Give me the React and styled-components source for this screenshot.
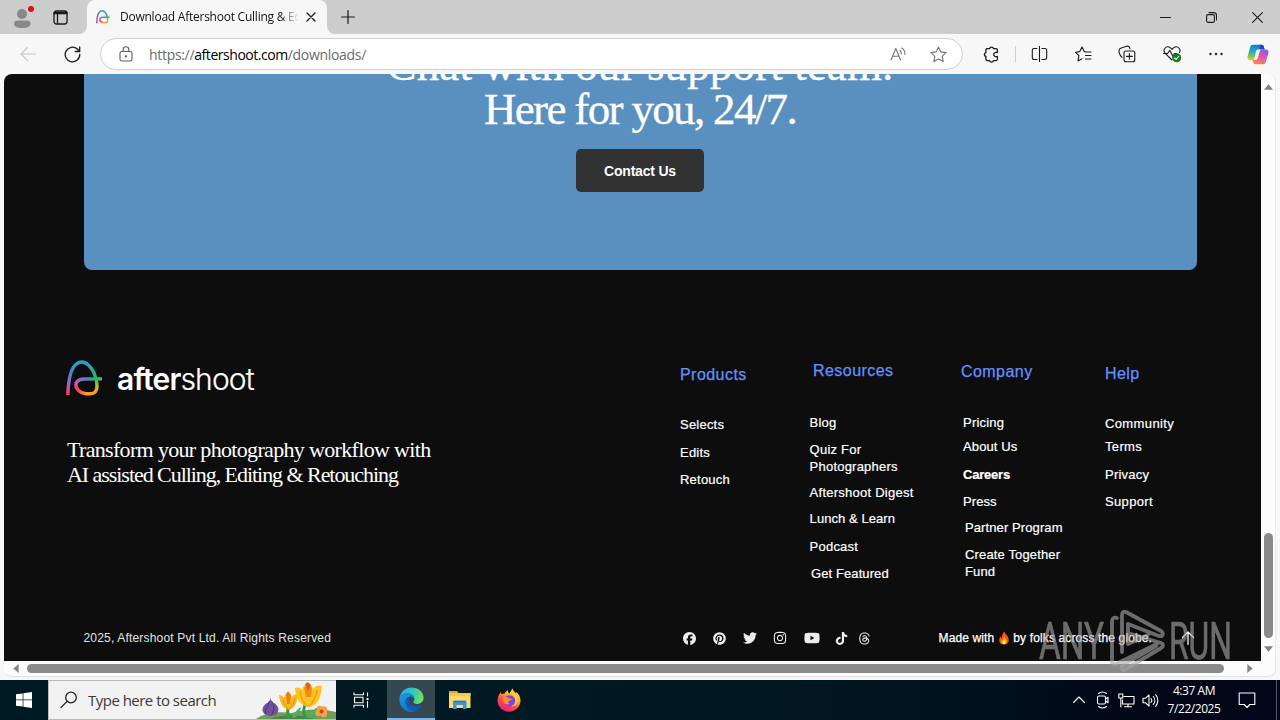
import styled, { createGlobalStyle } from "styled-components";
import {
  FaFacebook,
  FaPinterest,
  FaTwitter,
  FaYoutube,
  FaTiktok,
  FaThreads,
  FaInstagram,
} from "react-icons/fa6";

const GlobalStyle = createGlobalStyle`
  * {
    box-sizing: border-box;
  }
  body {
    margin: 0;
    overflow: hidden;
    font-family: "Open Sans", sans-serif;
  }
  svg {
    display: block;
    flex: none;
  }
`;

const Screen = styled.div`
  position: relative;
  display: flex;
  flex-direction: column;
  width: 1280px;
  height: 720px;
  background: #f7f7f7;
  overflow: hidden;
`;

/* ---------- browser chrome ---------- */

const TabStrip = styled.div`
  display: flex;
  align-items: center;
  height: 34px;
  background: #f7f7f7;
`;

const StripActions = styled.div`
  display: flex;
  align-items: center;
  gap: 18px;
  width: 87px;
  height: 34px;
  padding-left: 11px;
  background: #cdcdcd;
  border-bottom-right-radius: 8px;
`;

const TabSlot = styled.div`
  width: 240px;
  background: #cdcdcd;
`;

const Tab = styled.div`
  display: flex;
  align-items: center;
  height: 34px;
  padding-left: 9px;
  background: #f7f7f7;
  border-radius: 8px 8px 0 0;
`;

const TabTitle = styled.div`
  width: 178px;
  margin-left: 10px;
  font-size: 12px;
  letter-spacing: -0.24px;
  line-height: 18px;
  color: #111;
  white-space: nowrap;
  overflow: hidden;
  mask-image: linear-gradient(90deg, #000 160px, transparent 179px);
`;

const TabClose = styled.div`
  margin-left: 8px;
`;

const StripRest = styled.div`
  flex: 1;
  display: flex;
  align-items: center;
  justify-content: space-between;
  height: 34px;
  padding: 0 17px 0 14px;
  background: #cdcdcd;
  border-bottom-left-radius: 8px;
`;

const WindowControls = styled.div`
  display: flex;
  gap: 35px;
`;

const Toolbar = styled.div`
  display: flex;
  align-items: center;
  height: 40px;
  padding-left: 6px;
  background: #f7f7f7;
`;

const ToolSlot = styled.div`
  display: flex;
  justify-content: center;
  align-items: center;
  width: ${(p) => p.$w || 44}px;
  height: 32px;
`;

const Divider = styled.div`
  width: 1px;
  height: 16px;
  margin: 0 2px 0 1px;
  background: #cfcfcf;
`;

const Omnibox = styled.div`
  display: flex;
  align-items: center;
  width: 863px;
  height: 32px;
  margin-left: 6px;
  margin-right: 6px;
  padding: 0 15px 0 18px;
  background: #fff;
  border: 1px solid #d0d0d0;
  border-radius: 16px;
`;

const Url = styled.div`
  flex: 1;
  margin-left: 16px;
  font-size: 14px;
  letter-spacing: -0.31px;
  color: #6b6b6b;
  white-space: nowrap;

  b {
    font-weight: 400;
    color: #000;
    letter-spacing: -0.46px;
  }
`;

const OmniIcons = styled.div`
  display: flex;
  align-items: center;
  gap: 23px;
`;

/* ---------- page viewport and scrollbars ---------- */

const Viewport = styled.div`
  display: flex;
  height: 587px;
  padding: 0 4px;
`;

const Page = styled.div`
  width: 1257px;
  height: 587px;
  background: #0d0d0d;
  border-top-left-radius: 8px;
  overflow: hidden;
`;

const VScroll = styled.div`
  display: flex;
  flex-direction: column;
  align-items: center;
  justify-content: flex-end;
  width: 15px;
  background: #fcfcfc;
  border-top-right-radius: 8px;
  border-right: 1px solid #e8e8e8;
  padding: 10px 0 9px 1px;
`;

const VThumb = styled.div`
  width: 9px;
  height: 105px;
  margin: auto 0 8px;
  border-radius: 5px;
  background: #8a8a8a;
`;

const HScroll = styled.div`
  display: flex;
  align-items: center;
  width: 1272px;
  height: 16px;
  margin: 0 4px 3px;
  padding: 0 22px 0 9px;
  background: #fcfcfc;
  border: solid #e2e2e2;
  border-width: 0 1px 1px 0;
  border-radius: 0 0 8px 8px;
`;

const HThumb = styled.div`
  flex: 1;
  height: 9px;
  margin: 0 23px 0 8px;
  border-radius: 5px;
  background: #8a8a8a;
`;

/* ---------- support banner ---------- */

const Banner = styled.section`
  display: flex;
  flex-direction: column;
  align-items: center;
  width: 1113px;
  height: 196px;
  margin-left: 80px;
  padding-right: 1px;
  background: #5a90c0;
  border-radius: 0 0 8px 8px;
`;

const BannerTitle = styled.h2`
  margin: -31px 0 18px;
  font: 400 45px/44px "Liberation Serif", serif;
  text-align: center;
  color: #fff;
  -webkit-text-stroke: 0.3px #fff;
`;

const TitleLine = styled.div`
  letter-spacing: ${(p) => p.$ls}px;
`;

const ContactButton = styled.button`
  width: 128px;
  height: 43px;
  padding: 0;
  border: none;
  border-radius: 5px;
  background: #323232;
  color: #fff;
  font: 700 14px "Liberation Sans", sans-serif;
  letter-spacing: -0.2px;
`;

/* ---------- footer ---------- */

const Footer = styled.footer`
  display: flex;
  flex-direction: column;
  height: 391px;
  font-family: "Liberation Sans", sans-serif;
`;

const FooterTop = styled.div`
  display: grid;
  grid-template-columns: 614px 129.6px 151.4px 144px 1fr;
  height: 351px;
  padding: 90px 0 0 62px;
`;

const Brand = styled.div`
  display: flex;
  align-items: center;
  gap: 14px;
  height: 37px;
`;

const BrandName = styled.div`
  font: 300 30px/36px Inter, sans-serif;
  letter-spacing: -0.85px;
  color: #fff;
  -webkit-text-stroke: 0.2px #fff;

  b {
    font-weight: 600;
    -webkit-text-stroke: 0;
  }
`;

const Tagline = styled.p`
  margin: 40px 0 0 1px;
  font: 400 22px/25px "Liberation Serif", serif;
  color: #fff;
  white-space: nowrap;
`;

const TagLine = styled.span`
  display: block;
  letter-spacing: ${(p) => p.$ls}px;
`;

const LinkColumn = styled.div`
  display: flex;
  flex-direction: column;
  align-items: flex-start;
`;

const LinkHeading = styled.h3`
  margin: ${(p) => p.$top}px 0 ${(p) => p.$gap}px ${(p) => p.$indent || 0}px;
  font-size: 16px;
  font-weight: 400;
  line-height: 20px;
  letter-spacing: 0.45px;
  color: #6490ff;
  -webkit-text-stroke: 0.25px #6490ff;
`;

const FooterLink = styled.a`
  margin: ${(p) => p.$gap || 0}px 0 0 ${(p) => p.$indent || 0}px;
  font-size: 13px;
  font-weight: ${(p) => (p.$bold ? 700 : 400)};
  line-height: 17px;
  letter-spacing: ${(p) => (p.$ls === undefined ? 0.22 : p.$ls)}px;
  white-space: pre-line;
  color: #fff;
  -webkit-text-stroke: 0.2px #fff;
`;

const FooterBottom = styled.div`
  display: flex;
  align-items: center;
  height: 34px;
  padding-left: 79.5px;
  font-size: 12px;
  color: #fff;
`;

const Copyright = styled.div`
  width: 595px;
  letter-spacing: 0.18px;
  color: #e2e2e2;
`;

const Socials = styled.div`
  display: flex;
  align-items: center;
  width: 260px;
  color: #ededed;
`;

const Social = styled.a`
  display: flex;
  justify-content: center;
  width: ${(p) => p.$w}px;
`;

const MadeWith = styled.div`
  display: flex;
  align-items: center;
  width: 242px;
  letter-spacing: 0.13px;
  white-space: pre;
  -webkit-text-stroke: 0.25px #fff;
`;

/* ---------- watermark ---------- */

const Watermark = styled.svg`
  position: absolute;
  left: 1036px;
  top: 606px;
  opacity: 0.62;
`;

/* ---------- windows taskbar ---------- */

const Taskbar = styled.div`
  display: flex;
  height: 40px;
  background: linear-gradient(90deg, #001a23 0%, #011820 55%, #00121e 75%, #000616 90%, #020619 100%);
  color: #fff;
`;

const TaskButton = styled.div`
  display: flex;
  justify-content: center;
  align-items: center;
  width: ${(p) => p.$w || 49}px;
  height: 40px;
  background: ${(p) => (p.$active ? "#35474f" : "transparent")};
  border-bottom: ${(p) => (p.$active ? "2px solid #76b9ed" : "none")};
`;

const SearchBox = styled.div`
  display: flex;
  align-items: center;
  width: 288px;
  height: 40px;
  padding-left: 11px;
  background: #f2f2f2;
  border: 1px solid #b9bcbd;
  border-width: 1px 0 1px 1px;
  overflow: hidden;
`;

const SearchText = styled.span`
  width: 169px;
  margin-left: 10px;
  font-size: 15px;
  letter-spacing: -0.52px;
  color: #3a3a3a;
`;

const Tray = styled.div`
  display: flex;
  align-items: center;
  gap: 7px;
  margin-left: auto;
  padding-right: 3px;
`;

const Clock = styled.div`
  width: 58px;
  margin: 0 8px 0 -1px;
  font-size: 12px;
  line-height: 18px;
  letter-spacing: -0.45px;
  text-align: center;
`;

const DesktopEdge = styled.div`
  width: 1px;
  height: 40px;
  margin-left: 13px;
  background: #555b66;
`;

/* ---------- drawings ---------- */

const Line = ({ w = 18, h = w, children, stroke = "#1a1a1a", sw = 1.1 }) => (
  <svg
    width={w}
    height={h}
    viewBox={`0 0 ${w} ${h}`}
    fill="none"
    stroke={stroke}
    strokeWidth={sw}
    strokeLinecap="round"
    strokeLinejoin="round"
  >
    {children}
  </svg>
);

const Logo = ({ size = 37, id, sw = 3.4 }) => (
  <svg width={size} height={size} viewBox="0 0 37 37" fill="none" strokeWidth={sw}>
    <defs>
      <linearGradient id={`${id}a`} x1="0" y1="1" x2="0.3" y2="0">
        <stop offset="0" stopColor="#ff3d57" />
        <stop offset="0.3" stopColor="#a067c0" />
        <stop offset="0.65" stopColor="#4a80dc" />
        <stop offset="1" stopColor="#2a9fc4" />
      </linearGradient>
      <linearGradient id={`${id}b`} x1="0" y1="0" x2="0" y2="1">
        <stop offset="0" stopColor="#2a9fc4" />
        <stop offset="0.5" stopColor="#28b865" />
        <stop offset="0.75" stopColor="#d2b52a" />
        <stop offset="1" stopColor="#ff9d1c" />
      </linearGradient>
      <linearGradient id={`${id}c`} gradientUnits="userSpaceOnUse" x1="10" y1="0" x2="36" y2="0">
        <stop offset="0" stopColor="#c45bb0" />
        <stop offset="0.45" stopColor="#4a80dc" />
        <stop offset="0.75" stopColor="#28b865" />
        <stop offset="1" stopColor="#45c843" />
      </linearGradient>
      <linearGradient id={`${id}d`} x1="0" y1="0" x2="1" y2="0.5">
        <stop offset="0" stopColor="#d653a0" />
        <stop offset="0.4" stopColor="#ff3f50" />
        <stop offset="1" stopColor="#ff9d1c" />
      </linearGradient>
    </defs>
    <path d="M1.800 35C2.500 15 7 2 16 2C18 2 19.500 2.700 21 4" stroke={`url(#${id}a)`} />
    <path d="M20 3.200C26.500 7.500 31 17 31 26C31 32 28 33.900 23 33.800" stroke={`url(#${id}b)`} />
    <path d="M10 23.500C11 20.500 14.500 19 19 19L36 18.900" stroke={`url(#${id}c)`} />
    <path d="M10.200 22.700C8.500 29.500 15 33.800 23.200 33.800" stroke={`url(#${id}d)`} />
  </svg>
);

const Avatar = () => (
  <svg width="24" height="26" viewBox="0 0 24 26">
    <circle cx="11" cy="10" r="5" fill="#8a8886" />
    <path d="M3 20c0-3 2-3.500 4.500-3.500h7.500c2.500 0 4.500.5 4.500 3.500 0 2.600-3.500 4-8.200 4S3 22.500 3 20z" fill="#8a8886" />
    <circle cx="20" cy="5" r="4" fill="#cdcdcd" />
    <circle cx="20" cy="5" r="3" fill="#d80f1f" />
  </svg>
);

const Copilot = () => (
  <svg width="22" height="21" viewBox="0 0 22 21">
    <defs>
      <linearGradient id="cpA" x1="0.2" y1="0" x2="0.1" y2="1">
        <stop offset="0" stopColor="#1578dc" />
        <stop offset="0.35" stopColor="#18a8c9" />
        <stop offset="0.7" stopColor="#6cc75f" />
        <stop offset="1" stopColor="#f5c723" />
      </linearGradient>
      <linearGradient id="cpB" x1="0.8" y1="0" x2="0.3" y2="1">
        <stop offset="0" stopColor="#8b5ae8" />
        <stop offset="0.45" stopColor="#dd55b5" />
        <stop offset="1" stopColor="#ff8740" />
      </linearGradient>
    </defs>
    <path d="M6 .8h8.300c1.400 0 2.200.8 2.600 2.200l.8 2.600h-2.500c-1.500 0-2.400.8-2.800 2.200L10.200 14c-.5 1.500-1.400 2.200-3 2.200H3C1 16.200 0 14.500.6 12.300L3.200 3C3.700 1.500 4.600.8 6 .8z" fill="url(#cpA)" />
    <path d="M12.500.8h1.800c1.400 0 2.200.8 2.600 2.200l.8 2.600h-2.500c-1 0-1.700.4-2.200 1.200z" fill="#1746c7" />
    <path d="M16 20.300H8.600c-1.400 0-2.100-.8-2.500-2.200l-.5-1.900h1.600c1.600 0 2.500-.7 3-2.200l2.200-6.200c.4-1.400 1.300-2.200 2.800-2.200H19c2 0 3 1.700 2.400 3.900L18.700 18c-.4 1.500-1.300 2.300-2.700 2.300z" fill="url(#cpB)" />
    <path d="M9 7.200c.4-1 .9-1.600 2-1.600h4c-1.300.1-2 .9-2.400 2.200L10.700 14c-.4 1.200-1 1.900-2.200 2.100H7z" fill="#f7f7f7" />
  </svg>
);

const Flame = () => (
  <svg width="12" height="14" viewBox="0 0 12 14">
    <path d="M6.500.4C7 3 10.800 5 10.800 9c0 2.800-2 4.600-4.800 4.600S1.200 11.800 1.200 9.200c0-2 .8-3 1.600-4 .1 1 .5 1.500 1 1.800C3.800 4.500 4.500 2 6.500.4z" fill="#f4511e" stroke="none" />
    <path d="M6.300 5.500c.3 1.600 2.400 2.600 2.400 4.900 0 1.800-1.100 2.900-2.700 2.900s-2.800-1-2.800-2.800c0-1.200.5-1.900 1-2.400.1.700.4 1 .8 1.100 0-1.400.3-2.700 1.300-3.700z" fill="#ffb300" />
    <path d="M6 9.300c.8.700 1.300 1.300 1.300 2.200 0 1-.5 1.600-1.300 1.600s-1.400-.6-1.400-1.500.6-1.600 1.400-2.300z" fill="#fff176" />
  </svg>
);

const Flowers = () => (
  <svg width="80" height="38" viewBox="0 0 80 38">
    <path d="M0 38c8-6 22-8 36-6 12-4 30-5 44-1v7z" fill="#6f9e5a" />
    <path d="M14 38c12-5 30-5 44 0z" fill="#527f48" />
    <path d="M33 38c-3-6-1-10 0-14M50 38c-4-6-2-14 1-19" stroke="#2f9b4d" strokeWidth="3" fill="none" />
    <path d="M36 37c3-7 6-9 9-11-1 5-3 9-7 11zM52 37c3-7 8-10 12-12-1 6-5 10-10 12z" fill="#46b45c" />
    <path d="M14.500 16c0 4 2 5 5 7 3.500 3 4 7 1 10-3 2.500-9 2.500-12 0-3-3-2.500-7 1-10 3-2 5-3 5-7z" fill="#71519c" />
    <path d="M13.500 20c-1 5-5 7-4 13M15.500 20c3 4 3 9 0 14" stroke="#4b3578" strokeWidth="1" fill="none" />
    <path d="M23 14c2 0 4 1 5 3 1-3 2-5 4-6 2 1 3 3 4 5 1-2 3-3 6-3-.5 8-3 15-9 15.500C27 28.500 24 22 23 14z" fill="#f8b91c" />
    <path d="M30 13l2-3 3 4-1 9h-3z" fill="#ee8114" />
    <path d="M27 19c1 4 3 7 5 9M39 17c-1 5-3 9-6 11" stroke="#e5920f" strokeWidth="1" fill="none" />
    <path d="M39 7c3-1 6 0 7 2 1-4 3-6 6-7 3 1 4 3 5 6 2-3 5-4 9-3-1 11-4 20-13 21C44 25 40 17 39 7z" fill="#ffc423" />
    <path d="M48 7l4-5 4 5-1 9h-5z" fill="#f08a18" />
    <path d="M44 10c1 7 4 13 8 15M61 9c-1 8-4 13-8 16" stroke="#ea9a12" strokeWidth="1.200" fill="none" />
    <path d="M49 3l3-2 3 3-3 6z" fill="#d9641a" />
    <g fill="#f5a043">
      <circle cx="64" cy="28" r="3.200" />
      <circle cx="68" cy="28.500" r="3.200" />
      <circle cx="62.500" cy="32" r="3.200" />
      <circle cx="68" cy="33" r="3.200" />
    </g>
    <circle cx="65.500" cy="30.500" r="2" fill="#b8501b" />
  </svg>
);

const EdgeIcon = () => (
  <svg width="25" height="25" viewBox="0 0 24 24">
    <defs>
      <linearGradient id="edA" x1="0" y1="0.3" x2="1" y2="0.5">
        <stop offset="0" stopColor="#2aa9e8" />
        <stop offset="0.5" stopColor="#2fc4c4" />
        <stop offset="1" stopColor="#6fe35a" />
      </linearGradient>
      <linearGradient id="edB" x1="0" y1="0" x2="0.6" y2="1">
        <stop offset="0" stopColor="#1b9de2" />
        <stop offset="1" stopColor="#0f6fd0" />
      </linearGradient>
    </defs>
    <path d="M.5 11C1.200 4.800 6 .4 12 .4c6.700 0 11.600 4.600 11.600 9.800 0 3.600-2.800 6-6.300 6-2.200 0-3.700-.7-3.700-1.500 0-.6 1.100-1 1.100-2.900C14.700 8.500 11.500 6 7.700 6 4.500 6 1.800 8 .5 11z" fill="url(#edA)" />
    <path d="M.4 12C.5 8.500 3.700 6 7.700 6c3.500 0 6.500 2 7 5-.8-1.300-2.200-2-3.700-2-2.600 0-4.600 2.200-4.600 5.200 0 4.800 4 9 9 9.100C14.200 23.700 13.100 24 12 24 5.500 24 .4 18.600.4 12z" fill="url(#edB)" />
    <path d="M9.800 9.300C7.800 10 6.400 11.900 6.400 14.200c0 4.800 4 9.100 9 9.100 3-.9 5.300-2.800 6.700-5.300.3-.5-.1-.8-.6-.6-5.300 2.600-12 .2-12-4.800 0-1.300.1-2.300.3-3.300z" fill="#1558b0" />
  </svg>
);

const ExplorerIcon = () => (
  <svg width="22" height="20" viewBox="0 0 22 20">
    <path d="M0 1h8l2 2.500H0z" fill="#e9a11b" />
    <path d="M0 3h21.500v15H0z" fill="#ffd86b" />
    <path d="M0 3h21.500v3H0z" fill="#f8c64a" />
    <path d="M4 19v-7.200c0-.6.400-1 1-1h11.500c.6 0 1 .4 1 1V19H14v-4H7.500v4z" fill="#3a97dd" />
    <path d="M5 10.800h11.500v1.500H5z" fill="#2277bd" />
  </svg>
);

const FirefoxIcon = () => (
  <svg width="24" height="24" viewBox="0 0 24 24">
    <defs>
      <linearGradient id="ffA" x1="0.85" y1="0" x2="0.25" y2="1">
        <stop offset="0" stopColor="#fff04a" />
        <stop offset="0.35" stopColor="#ffb02e" />
        <stop offset="0.65" stopColor="#ff4a4a" />
        <stop offset="1" stopColor="#f0148c" />
      </linearGradient>
    </defs>
    <path d="M4 4c0 1 .2 1.700.6 2.300C5.500 5.700 6.500 5.400 7.600 5.500 8.200 4 9.500 2.800 11 2.300 10.800 4 11.500 5 12.500 5.500L15.500.3c.3 2.200 2 3.300 3.500 5 .4-.3.500-.8.400-1.300C21.800 6 23.500 9.300 23.500 12.500c0 6.300-5.200 11.200-11.500 11.200S.5 18.800.5 12.500C.5 9.200 1.900 6 4 4z" fill="url(#ffA)" />
    <circle cx="12.500" cy="12.800" r="5.600" fill="#7a45e6" />
    <path d="M6.300 9c2.300-.8 4.300-.2 5.800 1.300 1.200 0 2.500.5 2.500 1.400-.4.900-2 .8-2.800 1.500-.8.900-.5 2.200 1 2.900-3 1-6-.7-6.900-3.100-.5-1.400-.3-2.700.4-4z" fill="#ff8a2b" />
    <path d="M13 5.500c3 .4 5.800 3.300 5.600 7-.1 3-2 5-4.500 6 4.300-.2 7-3.300 7-7.300C21 8 18 5 15.800 2.500z" fill="#ffcb35" />
  </svg>
);

/* ---------- app ---------- */

const BrowserTop = () => (
  <>
    <TabStrip>
      <StripActions>
        <Avatar />
        <Line w={15} h={15} sw={1.3}>
          <rect x="1" y="1" width="13" height="13" rx="2.500" />
          <path d="M1.500 3h12" strokeWidth="2.400" />
          <path d="M4.500 4v9.500" />
        </Line>
      </StripActions>
      <TabSlot>
        <Tab>
          <Logo size={14} id="tab" sw={4} />
          <TabTitle>Download Aftershoot Culling &amp; Editing</TabTitle>
          <TabClose>
            <Line w={10} sw={1.3}>
              <path d="M1 1l8 8M9 1L1 9" />
            </Line>
          </TabClose>
        </Tab>
      </TabSlot>
      <StripRest>
        <Line w={14} sw={1.2}>
          <path d="M7 .6v12.800M.6 7h12.800" />
        </Line>
        <WindowControls>
          <Line w={11}>
            <path d="M.5 5.500h10" />
          </Line>
          <Line w={11}>
            <rect x=".6" y="2.600" width="7.800" height="7.800" rx="1.500" />
            <path d="M3 .6h4.500a3 3 0 0 1 3 3V8" />
          </Line>
          <Line w={11}>
            <path d="M.6.6l9.800 9.800M10.400.6L.6 10.400" />
          </Line>
        </WindowControls>
      </StripRest>
    </TabStrip>
    <Toolbar>
      <ToolSlot>
        <Line w={16} stroke="#c6c6c6">
          <path d="M15.500 8H1M7.500 1.500L1 8l6.500 6.500" />
        </Line>
      </ToolSlot>
      <ToolSlot>
        <Line w={17} sw={1.3}>
          <path d="M15.800 8.500A7.300 7.300 0 1 1 13.300 3L15.600 5.300M15.700 1v4.500h-4.500" />
        </Line>
      </ToolSlot>
      <Omnibox>
        <Line w={14} h={16} stroke="#5c5c5c">
          <rect x="1" y="5.500" width="12" height="9.500" rx="1.800" />
          <path d="M4.200 5.500V3.500a2.800 2.800 0 0 1 5.600 0v2" />
          <circle cx="7" cy="10.300" r=".6" fill="#5c5c5c" />
        </Line>
        <Url>
          https://<b>aftershoot.com</b>/downloads/
        </Url>
        <OmniIcons>
          <Line w={17} h={15} stroke="#757575">
            <path d="M1 13L5.800 1.500 10.600 13M2.600 9.300H9M10 3.500c1 .9 1.400 2 1.300 3.500M11.800 1c2.500 1.500 3.300 4 3.100 6.500" />
          </Line>
          <Line w={17} stroke="#757575">
            <path d="M8.500 1l2.300 4.900 5.300.7-3.900 3.700 1 5.300-4.700-2.600-4.700 2.600 1-5.300L.9 6.600l5.300-.7z" />
          </Line>
        </OmniIcons>
      </Omnibox>
      <ToolSlot $w={45}>
        <Line w={17} sw={1.3}>
          <path d="M4.300 2.600h2.300a2 2 0 0 1 3.900 0H13c.9 0 1.400.5 1.400 1.300v2.600c-2.300-.6-3.700.6-3.700 2s1.400 2.600 3.700 2v2.600c0 .9-.5 1.500-1.400 1.500h-2.500a2 2 0 0 1-3.900 0H4.300c-.9 0-1.400-.6-1.400-1.400v-2.700a2 2 0 0 1 0-3.900V4c0-.9.500-1.400 1.400-1.400z" />
        </Line>
      </ToolSlot>
      <Divider />
      <ToolSlot $w={43}>
        <Line w={17} h={16}>
          <path d="M8.500.5v15M6 2.500H3A1.700 1.700 0 0 0 1.300 4.200v7.600A1.700 1.700 0 0 0 3 13.500h3M11 2.500h3a1.700 1.700 0 0 1 1.700 1.700v7.600a1.700 1.700 0 0 1-1.700 1.700h-3" />
        </Line>
      </ToolSlot>
      <ToolSlot>
        <Line w={17}>
          <path d="M10.800 5.800L9.200 5.600 7 1 4.800 5.600.6 6.300l3.300 3.400-.9 5.200 4-2.100M10.800 6H16M10.500 9.500H16M10.500 13H16" />
        </Line>
      </ToolSlot>
      <ToolSlot>
        <Line w={18}>
          <rect x="6" y="6" width="10.800" height="10.800" rx="2" />
          <path d="M11.400 8.500v5.800M8.500 11.400h5.800M4 12.300C2.500 11.500.9 8 1 6c0-1.500.8-2.400 2.200-2.900L8.500 1.300c1.800-.6 3 .3 3.500 2.500" />
        </Line>
      </ToolSlot>
      <ToolSlot $w={46}>
        <Line w={19} h={18}>
          <path d="M9 15L2.200 8.300C-.6 5 2.500 1 6 2c1.500.5 2.300 1.500 3 2.400.7-.9 1.500-1.900 3-2.400 3.500-1 6 2.500 4.500 5.500M.6 8.500h4L6.800 5.300l3 6 1.700-2.800h2" />
          <circle cx="13.700" cy="12.800" r="4.500" fill="#12801d" stroke="none" />
          <path d="M11.700 13l1.400 1.300 2.600-2.800" stroke="#fff" />
        </Line>
      </ToolSlot>
      <ToolSlot $w={42}>
        <Line w={14} h={4} stroke="none">
          <g fill="#222">
            <circle cx="1.500" cy="2" r="1.200" />
            <circle cx="7" cy="2" r="1.200" />
            <circle cx="12.500" cy="2" r="1.200" />
          </g>
        </Line>
      </ToolSlot>
      <ToolSlot $w={42}>
        <Copilot />
      </ToolSlot>
    </Toolbar>
  </>
);

const SiteFooter = () => (
  <Footer>
    <FooterTop>
      <div>
        <Brand>
          <Logo id="brand" />
          <BrandName>
            <b>after</b>shoot
          </BrandName>
        </Brand>
        <Tagline>
          <TagLine $ls={-0.67}>Transform your photography workflow with</TagLine>
          <TagLine $ls={-1.05}>AI assisted Culling, Editing &amp; Retouching</TagLine>
        </Tagline>
      </div>
      <LinkColumn>
        <LinkHeading $top={5} $gap={31}>Products</LinkHeading>
        <FooterLink>Selects</FooterLink>
        <FooterLink $gap={11}>Edits</FooterLink>
        <FooterLink $gap={10}>Retouch</FooterLink>
      </LinkColumn>
      <LinkColumn>
        <LinkHeading $top={1} $gap={33} $indent={3.4}>Resources</LinkHeading>
        <FooterLink>Blog</FooterLink>
        <FooterLink $gap={10}>{"Quiz For\nPhotographers"}</FooterLink>
        <FooterLink $gap={9} $ls={0.25}>Aftershoot Digest</FooterLink>
        <FooterLink $gap={9} $ls={0.07}>Lunch &amp; Learn</FooterLink>
        <FooterLink $gap={11}>Podcast</FooterLink>
        <FooterLink $gap={10} $indent={1.4} $ls={0.1}>Get Featured</FooterLink>
      </LinkColumn>
      <LinkColumn>
        <LinkHeading $top={2} $gap={32}>Company</LinkHeading>
        <FooterLink $indent={2}>Pricing</FooterLink>
        <FooterLink $gap={7} $indent={2} $ls={0.13}>About Us</FooterLink>
        <FooterLink $gap={11} $indent={2} $bold $ls={-0.2}>Careers</FooterLink>
        <FooterLink $gap={10} $indent={2} $ls={0.1}>Press</FooterLink>
        <FooterLink $gap={9} $indent={4} $ls={0.1}>Partner Program</FooterLink>
        <FooterLink $gap={10} $indent={4} $ls={0.15}>{"Create Together\nFund"}</FooterLink>
      </LinkColumn>
      <LinkColumn>
        <LinkHeading $top={4} $gap={31}>Help</LinkHeading>
        <FooterLink $ls={0.38}>Community</FooterLink>
        <FooterLink $gap={6} $ls={0.35}>Terms</FooterLink>
        <FooterLink $gap={11}>Privacy</FooterLink>
        <FooterLink $gap={10} $ls={0.35}>Support</FooterLink>
      </LinkColumn>
    </FooterTop>
    <FooterBottom>
      <Copyright>2025, Aftershoot Pvt Ltd. All Rights Reserved</Copyright>
      <Socials>
        <Social $w={22}><FaFacebook size={13} /></Social>
        <Social $w={38}><FaPinterest size={13} /></Social>
        <Social $w={23}><FaTwitter size={14} /></Social>
        <Social $w={37}><FaInstagram size={14} /></Social>
        <Social $w={26}><FaYoutube size={16} /></Social>
        <Social $w={34}><FaTiktok size={13} /></Social>
        <Social $w={12}><FaThreads size={13} /></Social>
      </Socials>
      <MadeWith>
        {"Made with "}
        <Flame />
        {" by folks across the globe."}
      </MadeWith>
      <Line w={14} stroke="#fff" sw={1.3}>
        <path d="M7 13.300V1M1.500 6.500L7 1l5.500 5.500" />
      </Line>
    </FooterBottom>
  </Footer>
);

const WindowsTaskbar = () => (
  <Taskbar>
    <TaskButton $w={48}>
      <svg width="16" height="16" viewBox="0 0 16 16" fill="#fff">
        <path d="M0 2.300L6.700 1.400v6.200H0zM7.400 1.300L16 0v7.600H7.400zM0 8.300h6.700v6.300L0 13.700zM7.400 8.300H16V16l-8.600-1.300z" />
      </svg>
    </TaskButton>
    <SearchBox>
      <Line w={18} stroke="#222" sw={1.3}>
        <circle cx="11" cy="6.500" r="5.300" />
        <path d="M7.100 10.400L1 16.500" />
      </Line>
      <SearchText>Type here to search</SearchText>
      <Flowers />
    </SearchBox>
    <TaskButton $w={51}>
      <Line w={17} h={16} stroke="#fff">
        <path d="M1 .8v1.900h9.500V.8M1 15.200v-1.900h9.500v1.900M1.500 5.200h8.500v5.600H1.500zM14.500.8v3.200M14.500 9.500v5.700" />
        <path d="M13.500 6h2v2h-2z" fill="#fff" stroke="none" />
      </Line>
    </TaskButton>
    <TaskButton $w={48} $active>
      <EdgeIcon />
    </TaskButton>
    <TaskButton $w={50}>
      <ExplorerIcon />
    </TaskButton>
    <TaskButton $w={48}>
      <FirefoxIcon />
    </TaskButton>
    <Tray>
      <Line w={14} stroke="#fff">
        <path d="M1.500 9.500L7 4l5.500 5.500" />
      </Line>
      <Line w={18} stroke="#fff">
        <path d="M5.500 2.500c2.500-1.800 5.500-1.800 8 0M5.500 15.500c2.500 1.800 5.500 1.800 8 0" />
        <rect x="4.500" y="5" width="8" height="8" rx="1.500" />
        <path d="M12.500 8L15 6.300v5.400L12.500 10" />
      </Line>
      <Line w={17} h={15} stroke="#fff">
        <path d="M6 3.500h10v7.500H4.500V7M10 11v2.500M6.500 13.700h7M.8 1h4v4h-4zM2.800 5v8.700" />
      </Line>
      <Line w={17} h={15} stroke="#fff">
        <path d="M1 5.300h2.300L7 2v11L3.300 9.700H1zM9 5.500c1 1.200 1 2.800 0 4M11.300 3.500c2 2.300 2 5.700 0 8M13.600 1.600c3 3.400 3 8.400 0 11.800" />
      </Line>
      <Clock>
        4:37 AM
        <br />
        7/22/2025
      </Clock>
      <Line w={18} stroke="#fff">
        <path d="M1.200 2h15.600v11.500h-5L9 16.500l-2.800-3h-5z" />
      </Line>
      <DesktopEdge />
    </Tray>
  </Taskbar>
);

const App = () => (
  <Screen>
    <GlobalStyle />
    <BrowserTop />
    <Viewport>
      <Page>
        <Banner>
          <BannerTitle>
            <TitleLine $ls={0.12}>Chat with our support team.</TitleLine>
            <TitleLine $ls={-1.66}>Here for you, 24/7.</TitleLine>
          </BannerTitle>
          <ContactButton>Contact Us</ContactButton>
        </Banner>
        <SiteFooter />
      </Page>
      <VScroll>
        <svg width="9" height="6" viewBox="0 0 9 6" fill="#858585">
          <path d="M4.500.3L9 5.700H0z" />
        </svg>
        <VThumb />
        <svg width="9" height="6" viewBox="0 0 9 6" fill="#858585">
          <path d="M4.500 5.700L9 .3H0z" />
        </svg>
      </VScroll>
    </Viewport>
    <HScroll>
      <svg width="6" height="9" viewBox="0 0 6 9" fill="#858585">
        <path d="M.3 4.500L5.700 0v9z" />
      </svg>
      <HThumb />
      <svg width="6" height="9" viewBox="0 0 6 9" fill="#858585">
        <path d="M5.700 4.500L.3 0v9z" />
      </svg>
    </HScroll>
    <WindowsTaskbar />
    <Watermark width="200" height="70" viewBox="0 0 200 70" fill="#a6a6a6" fontFamily="Roboto, sans-serif">
      <g stroke="#a6a6a6" strokeWidth="0.700">
        <text x="3" y="53" fontSize="51" textLength="65" lengthAdjust="spacingAndGlyphs">ANY</text>
        <text x="133" y="53" fontSize="51" textLength="63" lengthAdjust="spacingAndGlyphs">RUN</text>
      </g>
      <g fill="none" stroke="#a6a6a6" strokeWidth="3.800" strokeLinecap="round" strokeLinejoin="round">
        <path d="M81 12c-4-1-5 1-5 4v39c0 3 2 4 4 3l41-20" />
        <path d="M86 46V9c0-3 2-4 4-3l35 19c3 2 2 6-2 5L92 18v20l20-9" />
        <path d="M95 28l30 9c3 1 2 4 0 5L90 63c-4 2-6-1-3-4l33-19" />
      </g>
    </Watermark>
  </Screen>
);

export default App;
